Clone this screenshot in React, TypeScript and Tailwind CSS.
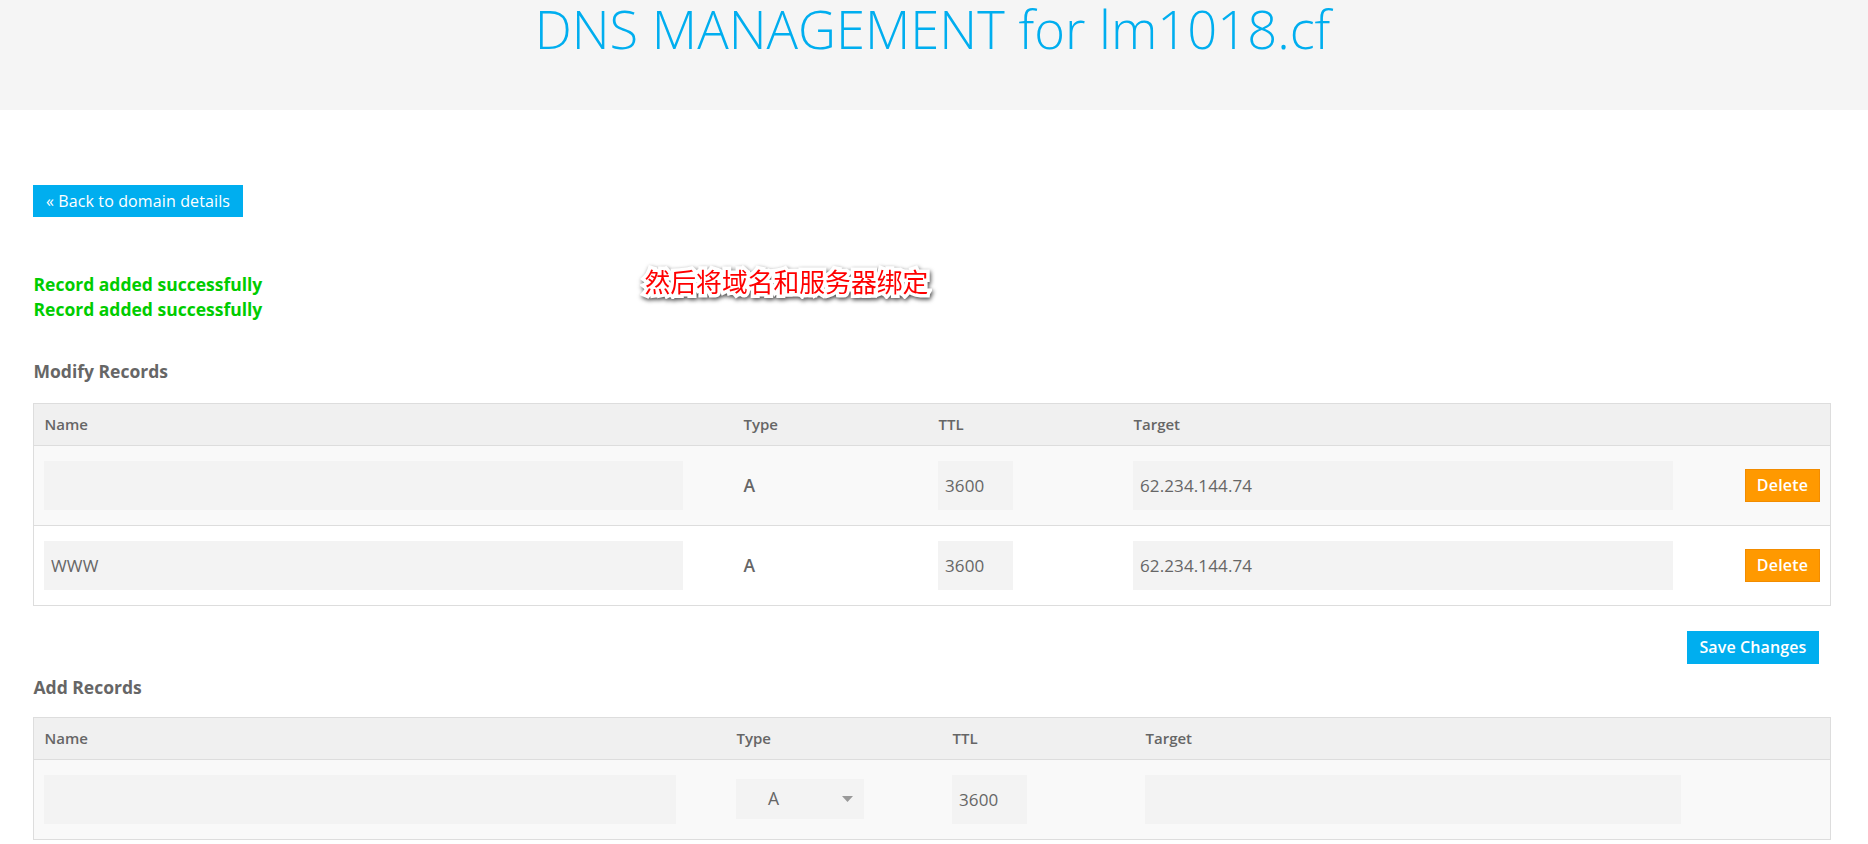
import type { ReactNode } from "react";

const MODIFY_COLS = "grid-cols-[699px_195px_195px_1fr_85px]";
const ADD_COLS = "grid-cols-[692px_216px_193px_1fr]";

function TableHead({ cols, labels }: { cols: string; labels: string[] }) {
  return (
    <div className={`grid h-[42px] items-center border-b border-[#dddddd] bg-[#f0f0f0] ${cols}`}>
      {labels.map((label) => (
        <div key={label} className="pb-0.5 pl-[10.5px] text-[15px] leading-5 font-semibold">
          {label}
        </div>
      ))}
    </div>
  );
}

function Field({ value, width }: { value: string; width: string }) {
  return (
    <input
      defaultValue={value}
      className={`block h-[49px] bg-[#f3f3f3] px-[7px] text-[17px] tracking-[0.12px] text-[#666666] outline-none ${width}`}
    />
  );
}

function Cell({ children }: { children?: ReactNode }) {
  return <div className="pl-2.5">{children}</div>;
}

const records = [
  { name: "", type: "A", ttl: "3600", target: "62.234.144.74" },
  { name: "WWW", type: "A", ttl: "3600", target: "62.234.144.74" },
];

export default function App() {
  return (
    <div className="relative h-[844px] overflow-hidden bg-white font-['Open_Sans',sans-serif] text-[#666666]">
      <header className="flex h-[110px] justify-center bg-[#f5f5f5] pr-[3px]">
        <h1 className="text-[52.5px] leading-[58px] font-light whitespace-nowrap text-[#00aeef]">
          DNS MANAGEMENT for lm1018.cf
        </h1>
      </header>

      <main className="pt-[75px] pr-[37px] pl-[33px]">
        <button className="flex h-8 w-[210px] items-center justify-center bg-[#00aeef] pb-px text-base tracking-[0.12px] text-white">
          « Back to domain details
        </button>

        <div className="mt-[55px] pl-[0.5px] text-[17.5px] leading-[25px] font-bold text-[#00cc00]">
          <p>Record added successfully</p>
          <p>Record added successfully</p>
        </div>

        <h2 className="mt-[37px] pl-[0.5px] text-[17.5px] leading-[25px] font-bold">Modify Records</h2>
        <section className="mt-[19px] border border-b-0 border-[#dddddd]">
          <TableHead cols={MODIFY_COLS} labels={["Name", "Type", "TTL", "Target"]} />
          {records.map((r, i) => (
            <div
              key={i}
              className={`grid h-20 items-center border-b border-[#dddddd] odd:bg-white even:bg-[#f9f9f9] ${MODIFY_COLS}`}
            >
              <Cell><Field value={r.name} width="w-[639px]" /></Cell>
              <Cell><div className="pb-px pl-[0.5px] text-[17.5px] font-semibold">{r.type}</div></Cell>
              <Cell><Field value={r.ttl} width="w-[75px]" /></Cell>
              <Cell><Field value={r.target} width="w-[540px]" /></Cell>
              <button className="flex h-[33px] w-[75px] items-center justify-center border border-[#f28c00] bg-[#ff9900] pb-0.5 text-base font-semibold tracking-[0.2px] text-white">
                Delete
              </button>
            </div>
          ))}
        </section>

        <div className="mt-[25px] flex justify-end pr-3">
          <button className="flex h-[33px] w-[132px] items-center justify-center bg-[#00aeef] pb-0.5 text-base font-semibold tracking-[0.12px] text-white">
            Save Changes
          </button>
        </div>

        <h2 className="mt-[11px] pl-[0.5px] text-[17.5px] leading-[25px] font-bold">Add Records</h2>
        <section className="mt-[17px] border border-b-0 border-[#dddddd]">
          <TableHead cols={ADD_COLS} labels={["Name", "Type", "TTL", "Target"]} />
          <div className={`grid h-20 items-center border-b border-[#dddddd] bg-[#f9f9f9] ${ADD_COLS}`}>
            <Cell><Field value="" width="w-[632px]" /></Cell>
            <Cell>
              <div className="mb-px flex h-10 w-32 items-center justify-between bg-[#f3f3f3] pr-[11px] pl-8 text-[17.5px]">
                <span className="pb-0.5">A</span>
                <svg width="11" height="6" viewBox="0 0 11 6" fill="#999999">
                  <path d="M0 0h11L5.5 6z" />
                </svg>
              </div>
            </Cell>
            <Cell><Field value="3600" width="w-[75px]" /></Cell>
            <Cell><Field value="" width="w-[536px]" /></Cell>
          </div>
        </section>
      </main>

      <div className="absolute top-[263px] left-[644.5px] font-['Noto_Sans_CJK_SC',sans-serif] text-[25.8px] leading-9 whitespace-nowrap text-[#ff0000] [paint-order:stroke_fill] [-webkit-text-stroke:7px_white] [filter:drop-shadow(1px_2px_2px_rgba(0,0,0,0.7))]">
        然后将域名和服务器绑定
      </div>
    </div>
  );
}
